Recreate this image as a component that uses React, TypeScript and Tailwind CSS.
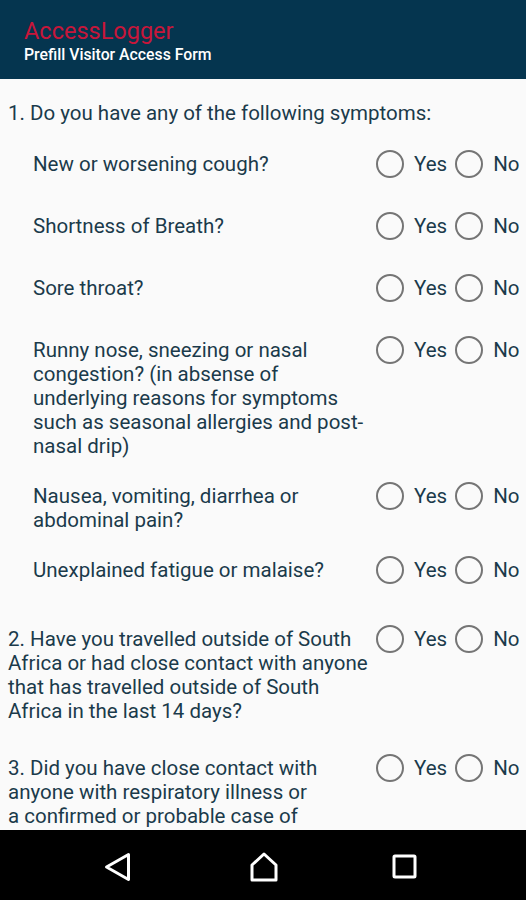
import type { ReactNode } from "react";

const font = { fontFamily: "Roboto, 'Noto Sans', sans-serif" };

function Radio({ label }: { label: string }) {
  return (
    <div className="flex items-center">
      <span className="h-[28px] w-[28px] rounded-full border-2 border-[#757575]" />
      <span className="ml-[10px] text-[20.5px] text-[#1b3a4b]">{label}</span>
    </div>
  );
}

function Row({ lines, indent }: { lines: string[]; indent?: boolean }) {
  return (
    <div className={`flex items-start ${indent ? "pl-[33px]" : "pl-[8px]"}`}>
      <p className="min-w-0 flex-1 pt-3 text-[20.5px] leading-[24px] text-[#1b3a4b]">
        {lines.map((l, i) => (
          <span key={i} className="block whitespace-nowrap">
            {l}
          </span>
        ))}
      </p>
      <div className="flex h-12 w-[150px] shrink-0 items-center gap-[8px]">
        <Radio label="Yes" />
        <Radio label="No" />
      </div>
    </div>
  );
}

function Section({ children }: { children: ReactNode }) {
  return <div className="flex flex-col gap-[14px]">{children}</div>;
}

export default function App() {
  return (
    <div className="flex h-[900px] w-[526px] flex-col bg-[#fafafa]" style={font}>
      <header className="flex h-[79px] shrink-0 flex-col justify-center bg-[#05354f] px-6 pt-[3px]">
        <h1 className="text-[23.5px] leading-[28px] text-[#c8163a]">AccessLogger</h1>
        <p className="text-[15.8px] leading-[20px] font-medium text-white">
          Prefill Visitor Access Form
        </p>
      </header>

      <main className="flex min-h-0 flex-1 flex-col gap-[21px] overflow-hidden pt-[22px]">
        <div className="flex flex-col gap-[15px]">
          <p className="pl-[8px] text-[20.5px] leading-[24px] text-[#1b3a4b]">
            1. Do you have any of the following symptoms:
          </p>
          <Section>
            <Row indent lines={["New or worsening cough?"]} />
            <Row indent lines={["Shortness of Breath?"]} />
            <Row indent lines={["Sore throat?"]} />
            <Row
              indent
              lines={[
                "Runny nose, sneezing or nasal",
                "congestion? (in absense of",
                "underlying reasons for symptoms",
                "such as seasonal allergies and post-",
                "nasal drip)",
              ]}
            />
            <Row indent lines={["Nausea, vomiting, diarrhea or", "abdominal pain?"]} />
            <Row indent lines={["Unexplained fatigue or malaise?"]} />
          </Section>
        </div>
        <Row
          lines={[
            "2. Have you travelled outside of South",
            "Africa or had close contact with anyone",
            "that has travelled outside of South",
            "Africa in the last 14 days?",
          ]}
        />
        <Row
          lines={[
            "3. Did you have close contact with",
            "anyone with respiratory illness or",
            "a confirmed or probable case of",
            "COVID-19?",
          ]}
        />
      </main>

      <nav className="flex h-[70px] shrink-0 items-center bg-black pt-[4px] pl-[104px]">
        <svg width="28" height="30" viewBox="0 0 28 30" fill="none" stroke="white" strokeWidth="3" strokeLinejoin="round">
          <path d="M24.5 2.5 L2.5 15 L24.5 27.5 Z" />
        </svg>
        <svg className="ml-[117px]" width="30" height="30" viewBox="0 0 30 30" fill="none" stroke="white" strokeWidth="3" strokeLinejoin="round">
          <path d="M15 2 L27 13 V28 H3 V13 Z" />
        </svg>
        <svg className="ml-[112px]" width="28" height="28" viewBox="0 0 28 28" fill="none" stroke="white" strokeWidth="3" strokeLinejoin="round">
          <rect x="3" y="3" width="21" height="21" rx="1" />
        </svg>
      </nav>
    </div>
  );
}
